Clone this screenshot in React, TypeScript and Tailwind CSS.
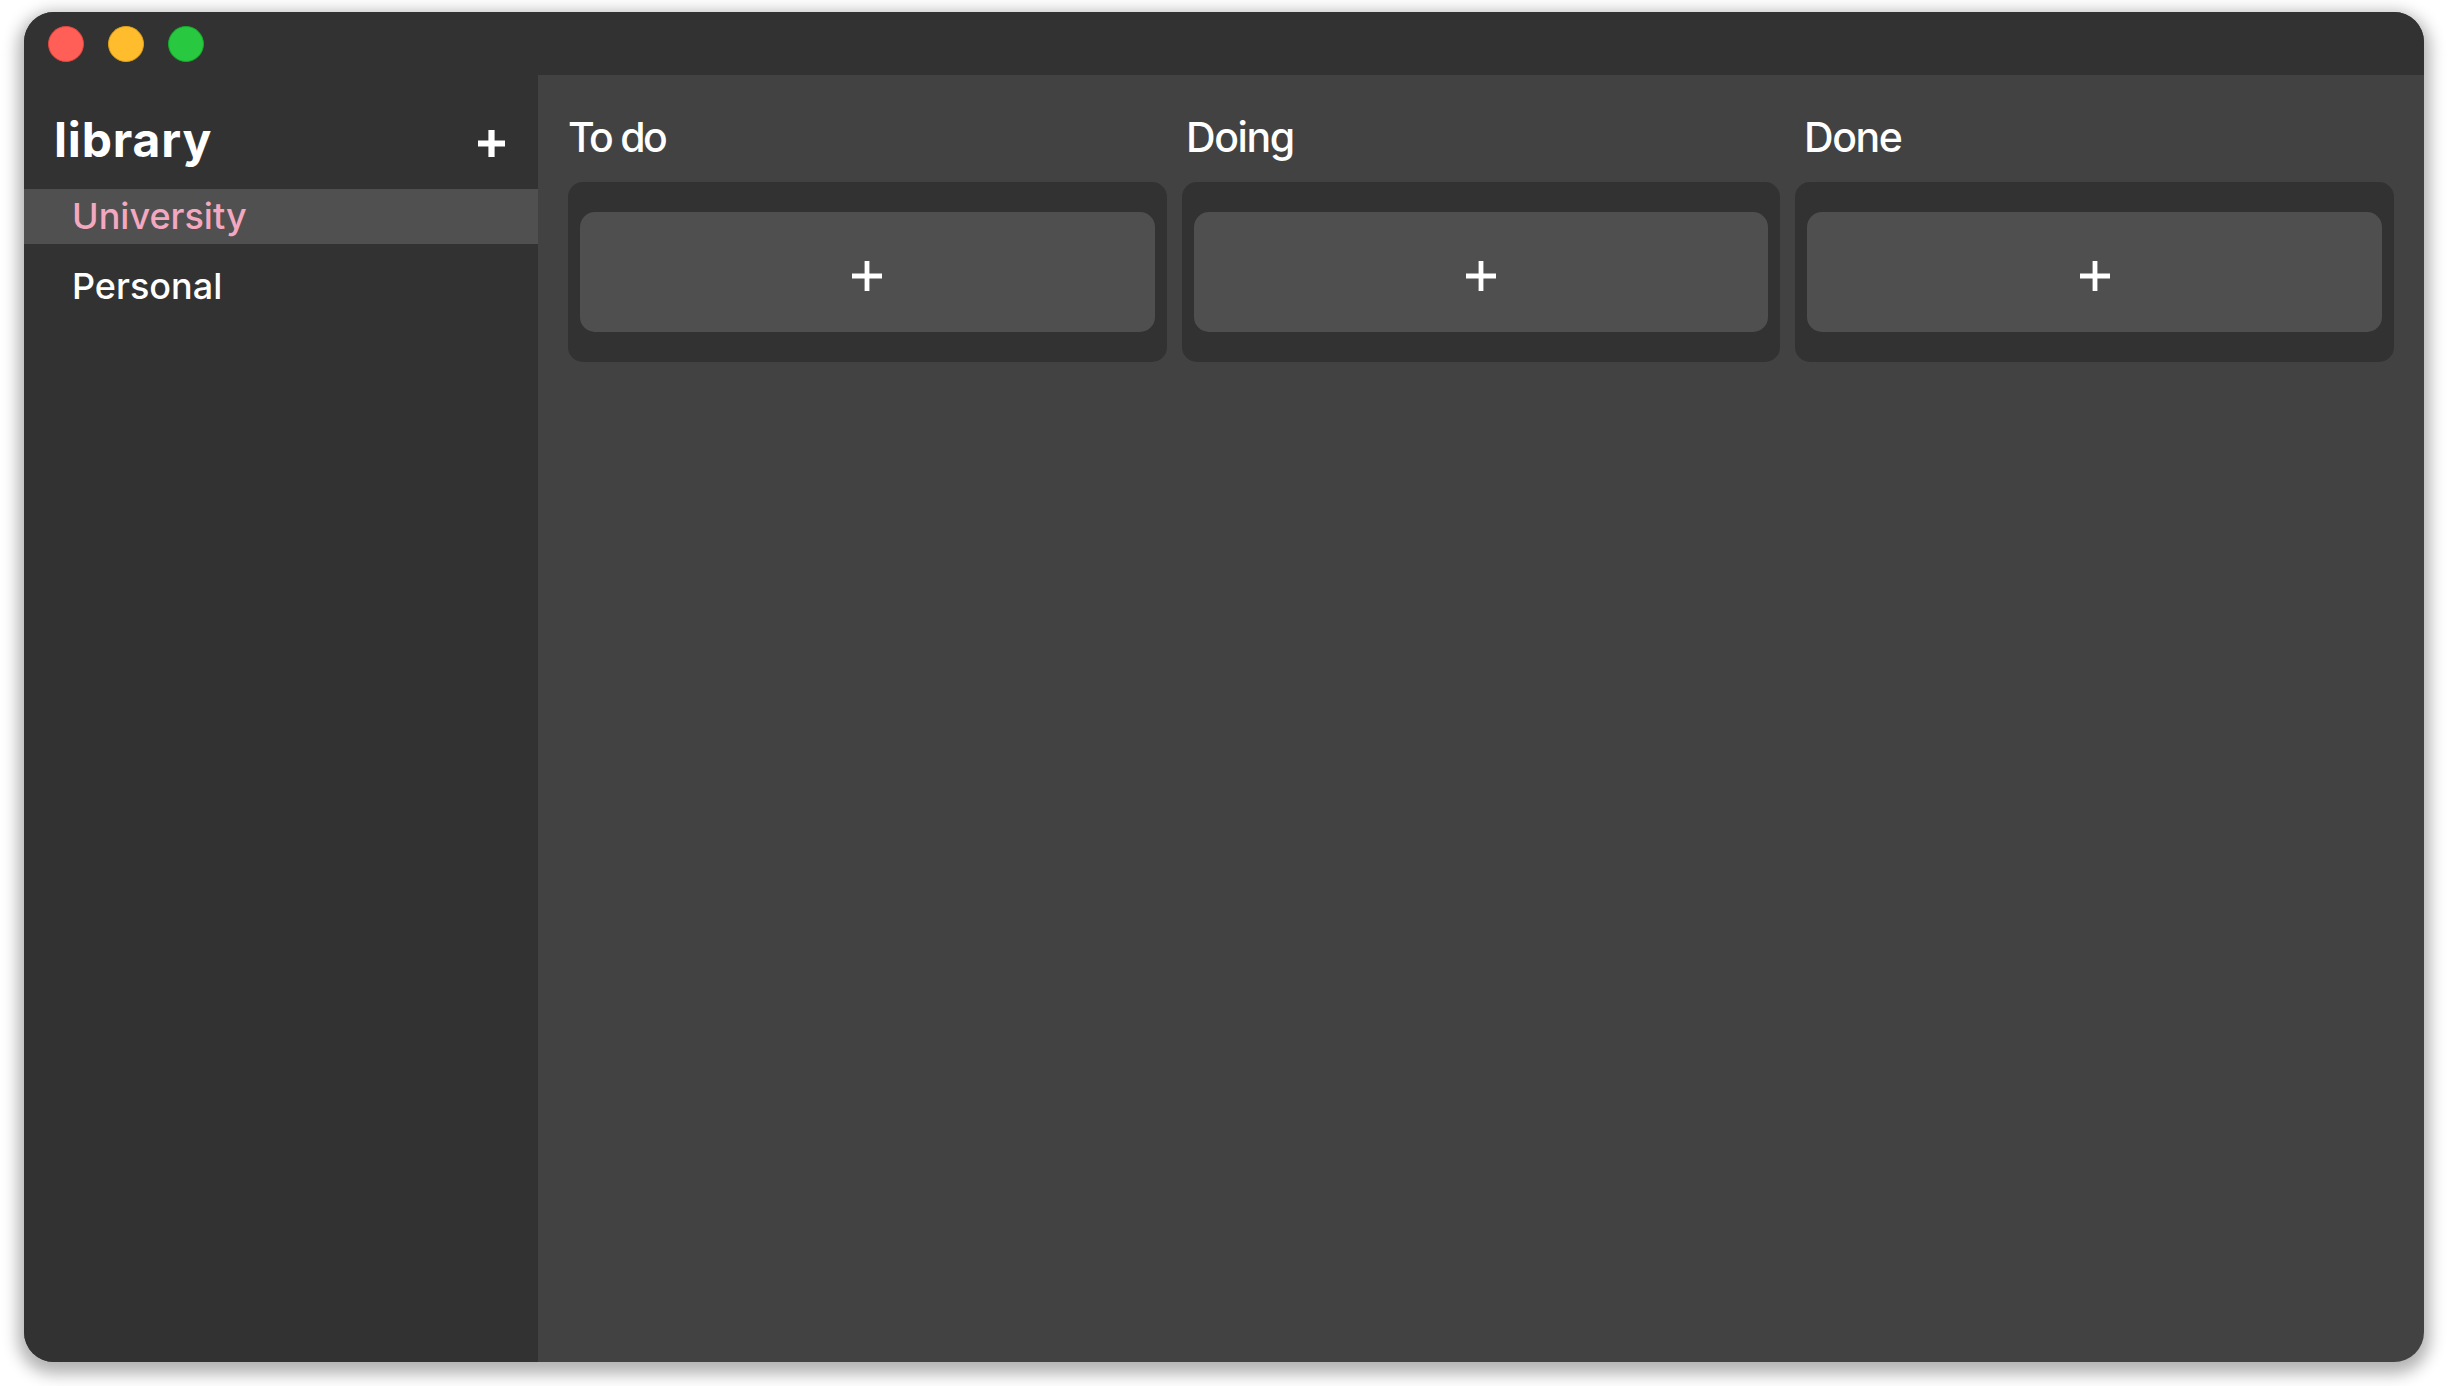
const font = "font-['Inter','Liberation_Sans',sans-serif]";

function Plus({ size, weight, className = '' }: { size: number; weight: number; className?: string }) {
  const mid = size / 2;
  return (
    <svg className={className} width={size} height={size} fill="none" stroke="white" strokeWidth={weight} aria-hidden="true">
      <path d={`M${mid} 0V${size}M0 ${mid}H${size}`} />
    </svg>
  );
}

function AddCard({ title }: { title: string }) {
  return (
    <section className="h-[180px] rounded-[15px] bg-[#323232] px-3 py-[30px]">
      <button
        className="flex h-[120px] w-full items-center justify-center rounded-[15px] bg-[#4f4f4f] pt-2"
        aria-label={`Add to ${title}`}
      >
        <Plus size={30} weight={4.8} />
      </button>
    </section>
  );
}

export default function App() {
  return (
    <div className={`${font} h-[1386px] w-[2448px] overflow-hidden bg-white pl-6 pt-3 text-white`}>
      <div className="flex h-[1350px] w-[2400px] flex-col overflow-hidden rounded-[30px] bg-[#424242] shadow-[0_6px_16px_6px_rgba(0,0,0,0.3)]">
        <header className="flex h-[63px] shrink-0 items-center gap-6 bg-[#323232] pl-6">
          <span className="size-9 rounded-full border border-[#e2463f] bg-[#ff5f57]" />
          <span className="size-9 rounded-full border border-[#e1a116] bg-[#ffbd2e]" />
          <span className="size-9 rounded-full border border-[#12ac28] bg-[#28c840]" />
        </header>
        <div className="flex grow">
          <aside className="w-[514px] bg-[#323232]">
            <div className="flex h-[114px] items-center justify-between pl-[30px] pr-[33px] pt-4">
              <h1 className="text-[48px] font-bold tracking-[0.85px]">library</h1>
              <Plus size={27} weight={6.2} className="mt-[7px]" />
            </div>
            <nav className="text-[36px] font-medium">
              <div className="h-[55px] bg-[#505050] pl-12 leading-[55px] text-[#f4a8c0]">University</div>
              <div className="mt-[15px] h-[55px] pl-12 leading-[55px]">Personal</div>
            </nav>
          </aside>
          <main className="grow px-[30px] pt-[30px]">
            <div className="flex h-[77px] text-[41px] leading-[64px] font-medium tracking-[-1.4px]">
              <h2 className="w-[618px] tracking-[-2.6px] [word-spacing:0.8px]">To do</h2>
              <h2 className="w-[618px]">Doing</h2>
              <h2>Done</h2>
            </div>
            <div className="grid grid-cols-3 gap-[15px]">
              <AddCard title="To do" />
              <AddCard title="Doing" />
              <AddCard title="Done" />
            </div>
          </main>
        </div>
      </div>
    </div>
  );
}
